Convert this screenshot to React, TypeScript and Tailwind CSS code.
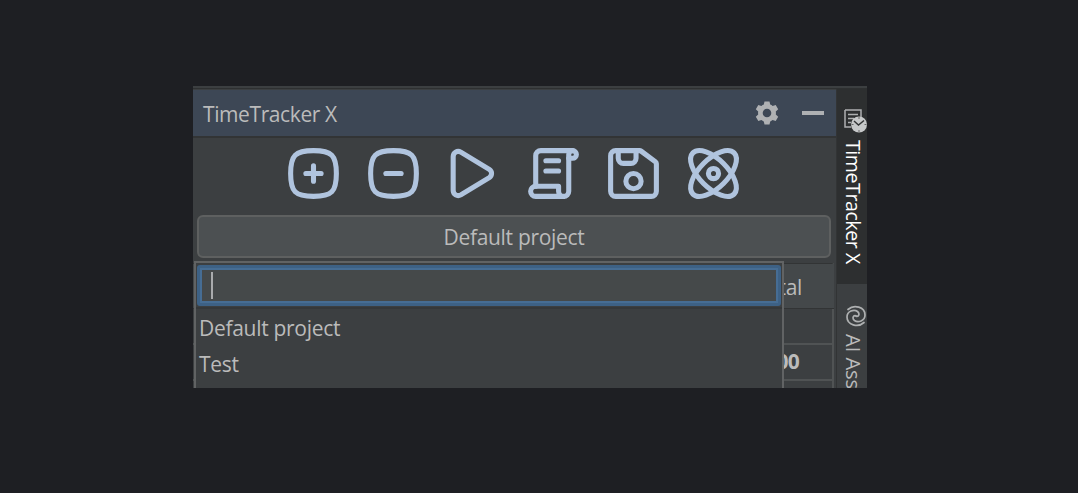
import type { ReactNode } from 'react';

function ToolIcon({ children }: { children: ReactNode }) {
  return (
    <button className="h-[61px] w-[61px] shrink-0">
      <svg
        viewBox="0 0 24 24"
        className="h-[61px] w-[61px]"
        fill="none"
        stroke="#b0c4de"
        strokeWidth="2"
        strokeLinecap="round"
        strokeLinejoin="round"
      >
        {children}
      </svg>
    </button>
  );
}

const squircle = 'M12 3c7.2 0 9 1.8 9 9s-1.8 9-9 9-9-1.8-9-9 1.8-9 9-9z';

function Toolbar() {
  return (
    <div className="flex h-[77px] shrink-0 gap-[19px] pt-[5px] pl-[89.5px]">
      <ToolIcon>
        <path d={squircle} />
        <path d="M9 12h6M12 9v6" />
      </ToolIcon>
      <ToolIcon>
        <path d={squircle} />
        <path d="M9 12h6" />
      </ToolIcon>
      <ToolIcon>
        <path d="M7 3.6 18.2 10.4c1.2.8 1.2 2.4 0 3.2L7 20.4C5.6 21.2 4 20.2 4 18.6V5.4C4 3.8 5.6 2.8 7 3.6z" />
      </ToolIcon>
      <ToolIcon>
        <path d="M5 17V5a2 2 0 0 1 2-2h12.5a1.5 1.5 0 0 1 0 3H18" />
        <path d="M18 4.5A1.5 1.5 0 0 1 19.5 3M18 4.5V19a2 2 0 0 1-2 2 2 2 0 0 1-2-2v-2H5a2 2 0 0 0 0 4h11" />
        <path d="M9 7h5M9 11h5" />
      </ToolIcon>
      <ToolIcon>
        <path d="M5 3h9.4a1 1 0 0 1 .6.2l5.6 4.2a1 1 0 0 1 .4.8V19a2 2 0 0 1-2 2H5a2 2 0 0 1-2-2V5a2 2 0 0 1 2-2z" />
        <path d="M6 3v3a2 2 0 0 0 2 2h3a2 2 0 0 0 2-2V3" />
        <circle cx="12" cy="15" r="3" />
      </ToolIcon>
      <ToolIcon>
        <ellipse cx="12" cy="12" rx="11.45" ry="5.56" transform="rotate(45 12 12)" />
        <ellipse cx="12" cy="12" rx="11.45" ry="5.56" transform="rotate(-45 12 12)" />
        <circle cx="12" cy="12" r="2" />
      </ToolIcon>
    </div>
  );
}

function Header() {
  return (
    <div className="flex h-[48px] shrink-0 items-center border-b-2 border-[#323435] bg-[#3d4755] pl-[10px]">
      <span className="pt-[2px] text-[21px] leading-[28px] tracking-[-0.4px] whitespace-nowrap">TimeTracker X</span>
      <svg viewBox="-12 -12 24 24" className="mr-[23px] ml-auto h-[24px] w-[24px]" fill="#afb1b3">
        <path
          fillRule="evenodd"
          d="M-2.5-11.5h5l.7 3.1a8.5 8.5 0 0 1 2.4 1.4l3.1-1 2.5 4.3L8.8-1.5a8.5 8.5 0 0 1 0 3L11.2 3.7 8.7 8l-3.1-1a8.5 8.5 0 0 1-2.4 1.4l-.7 3.1h-5l-.7-3.1A8.5 8.5 0 0 1-5.6 7l-3.1 1-2.5-4.3L-8.8 1.5a8.5 8.5 0 0 1 0-3L-11.2-3.7-8.7-8l3.1 1a8.5 8.5 0 0 1 2.4-1.4zM0-4.3a4.3 4.3 0 1 0 0 8.6 4.3 4.3 0 1 0 0-8.6z"
        />
      </svg>
      <div className="mr-[12px] h-[4px] w-[22px] bg-[#afb1b3]" />
    </div>
  );
}

function Table() {
  return (
    <div className="mt-[5px] mr-[2px] flex flex-1 flex-col border-t border-r-2 border-t-[#323435] border-r-[#505354]">
      <div className="-mr-[2px] flex h-[45px] shrink-0 items-center justify-end border-b border-[#323435] bg-[#44484a] pt-[2px] pr-[32px] text-[21px] leading-[28px] tracking-[-0.3px]">
        Total
      </div>
      <div className="h-[36px] shrink-0 border-b-2 border-[#505354]" />
      <div className="flex h-[36px] shrink-0 items-center justify-end border-b-2 border-[#505354] pr-[33px] pb-[2px] text-[21px] leading-[28px] font-bold tracking-[-0.7px]">
        00:00:00
      </div>
    </div>
  );
}

function Popup() {
  return (
    <div className="absolute top-[175px] left-[1px] flex h-[127px] w-[590px] flex-col border-2 border-b-0 border-[#616364] bg-[#3c3f41]">
      <div className="mx-px mt-[2px] h-[41px] shrink-0 rounded-[3px] border-[3px] border-[#3d6185]">
        <div className="flex h-full items-center border-2 border-[#466d94] bg-[#45494a] pl-[9px]">
          <div className="h-[27px] w-[2px] bg-[#a9abad]" />
        </div>
      </div>
      <div className="mt-px h-[2px] shrink-0 bg-[#35383a]" />
      <div className="mt-px flex h-[36px] shrink-0 items-center pl-[3px] text-[21px] leading-[28px] tracking-[-0.3px]">Default project</div>
      <div className="flex h-[36px] shrink-0 items-center pl-[3px] text-[21px] leading-[28px] tracking-[-0.3px]">Test</div>
    </div>
  );
}

function SideBar() {
  return (
    <div className="flex w-[31px] shrink-0 flex-col border-l border-[#323435]">
      <div className="flex h-[195px] shrink-0 flex-col items-start bg-[#2d2f30] pt-[20px]">
        <svg viewBox="0 0 23 25" className="ml-[7px] h-[25px] w-[23px] shrink-0" fill="none">
          <path d="M1 1h16v8M1 1v17h6M4 5.5h10M4 9.5h6M4 13.5h3" stroke="#aeb0b1" strokeWidth="1.5" />
          <circle cx="15" cy="15.5" r="8" fill="#c6c8c9" />
          <path d="m10 12 4.5 4 5.5-4.500" stroke="#333536" strokeWidth="1.5" />
          <path d="M15 8v2M15 21v2M7.5 15.5h2M20.5 15.5h2" stroke="#666" strokeWidth="1" />
        </svg>
        <span className="mt-[6px] ml-[2px] w-[28px] text-[19.5px] leading-[28px] tracking-[-0.4px] whitespace-nowrap text-white [writing-mode:vertical-rl]">
          TimeTracker X
        </span>
      </div>
      <div className="flex h-[104px] flex-col items-start overflow-hidden pt-[21px]">
        <svg viewBox="0 0 22 22" className="ml-[8px] h-[22px] w-[22px] shrink-0" fill="none" stroke="#aeb0b1" strokeWidth="1.7" strokeLinecap="round">
          <path d="M3 4.5C9-1 20 2 20 10C20 16 13 18 9.5 15.5C7 13.5 8 10 11 10.8" />
          <path d="M19 17.5C13 23 2 20 2 12C2 6 9 4 12.5 6.5C15 8.5 14 12 11 11.2" />
        </svg>
        <span className="mt-[7px] ml-[2px] w-[28px] text-[20px] leading-[28px] whitespace-nowrap [writing-mode:vertical-rl]">
          AI Assistant
        </span>
      </div>
    </div>
  );
}

export default function App() {
  return (
    <div className="flex h-[493px] w-[1078px] bg-[#1e1f23] pt-[86px] pl-[193px] font-['Open_Sans','Noto_Sans',sans-serif] text-[#bbbbbb]">
      <div className="relative flex h-[302px] w-[674px] flex-col overflow-hidden bg-[#3c3f41]">
        <div className="h-[3px] shrink-0 border-b border-[#2e3031]" />
        <div className="flex min-h-0 flex-1">
          <div className="flex w-[643px] shrink-0 flex-col pt-px">
            <Header />
            <Toolbar />
            <button className="mr-[5px] ml-[4px] h-[43px] shrink-0 rounded-[6px] border-2 border-[#5e6060] bg-[#4c5052] pt-px text-[21px] leading-[28px] tracking-[-0.3px]">
              Default project
            </button>
            <Table />
          </div>
          <SideBar />
        </div>
        <Popup />
      </div>
    </div>
  );
}
